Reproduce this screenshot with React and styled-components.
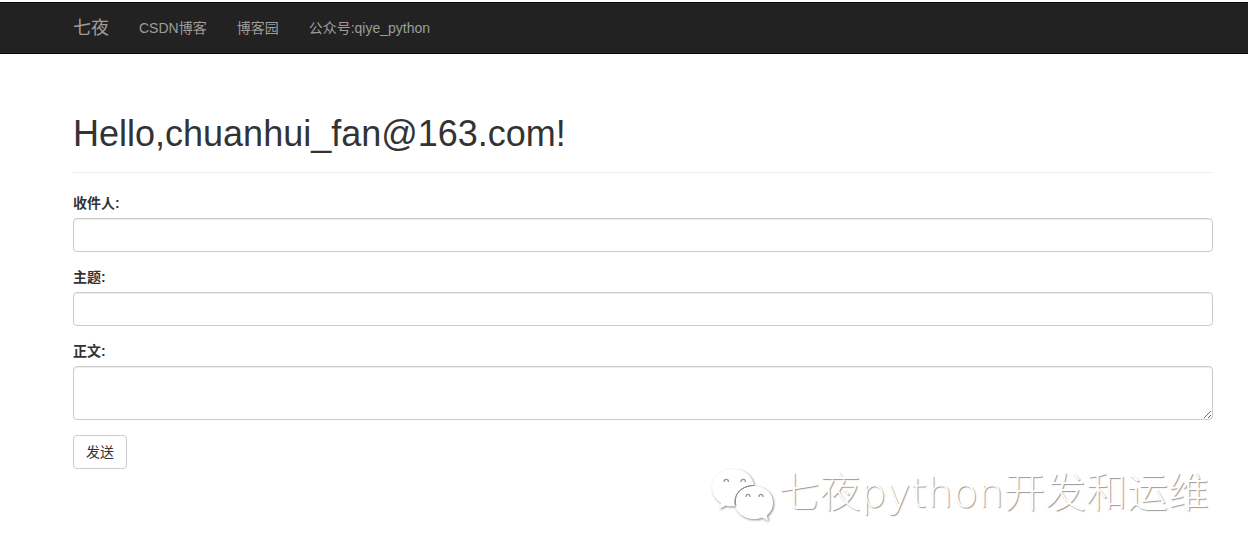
import React from "react";
import styled, { createGlobalStyle } from "styled-components";

const GlobalStyle = createGlobalStyle`
  *, *::before, *::after { box-sizing: border-box; }
  body {
    margin: 0;
    padding-top: 2px;
    background: #fff;
    color: #333;
    font-family: "Liberation Sans", Arial, "Noto Sans CJK SC", sans-serif;
    font-size: 14px;
    line-height: 20px;
  }
`;

const Navbar = styled.nav`
  display: flex;
  height: 52px;
  padding: 0 20px 0 58px;
  background: #222;
  border: solid #080808;
  border-width: 1px 0;
`;

const Brand = styled.a`
  padding: 15px;
  color: #9d9d9d;
  font-size: 18px;
  line-height: 20px;
  text-decoration: none;
`;

const NavList = styled.ul`
  display: flex;
  margin: 0;
  padding: 0;
  list-style: none;
`;

const NavLink = styled.a`
  display: block;
  padding: 15px;
  color: #9d9d9d;
  text-decoration: none;
  white-space: nowrap;
`;

const Container = styled.main`
  padding: 60px 35px 0 73px;
`;

const PageHeader = styled.header`
  padding-bottom: 18px;
  margin-bottom: 20px;
  border-bottom: 1px solid #eee;
`;

const Title = styled.h1`
  margin: 0;
  font-size: 36px;
  font-weight: 400;
  line-height: 40px;
`;

const Field = styled.div`
  margin-bottom: 15px;
`;

const Label = styled.label`
  display: block;
  margin-bottom: 5px;
  font-weight: 700;
`;

const Input = styled.input`
  display: block;
  width: 100%;
  height: ${(p) => (p.as === "textarea" ? "54px" : "34px")};
  padding: 6px 12px;
  color: #555;
  font: inherit;
  background: #fff;
  border: 1px solid #ccc;
  border-radius: 4px;
  box-shadow: inset 0 1px 1px rgba(0, 0, 0, 0.075);
  resize: vertical;
`;

const Button = styled.button`
  display: block;
  height: 34px;
  padding: 6px 12px;
  color: #333;
  font: inherit;
  background: #fff;
  border: 1px solid #ccc;
  border-radius: 4px;
`;

const Watermark = styled.footer`
  display: flex;
  justify-content: flex-end;
  align-items: flex-start;
  gap: 4px;
  padding-right: 39px;
  color: #fff;
  font-family: "DejaVu Sans Light", "DejaVu Sans", "Noto Sans CJK SC", sans-serif;
  font-size: 41px;
  font-weight: 300;
  line-height: 48px;
  text-shadow: 1px 1px 1px #999;
  white-space: nowrap;
`;

const Logo = styled.svg`
  flex: none;
  width: 64px;
  height: 54px;
  filter: drop-shadow(1px 1px 1px #888);
`;

function WeChatLogo() {
  return (
    <Logo viewBox="0 1 64 54" aria-hidden="true">
      <path
        fill="#fff"
        d="M22 1C10 1 1 9 1 19.500C1 26 4 31 10 35L8 41L15 37.500C18 38.500 21 38.500 24 38C21 27 30 17 43 17C41 7 33 1 22 1Z"
      />
      <path
        fill="#fff"
        d="M43 18C32 18 24 25 24 34.500C24 44 32 51 43 51C46 51 49 50.500 51 49.500L57 53L56 47.500C60 44 62 40 62 34.500C62 25 54 18 43 18Z"
      />
      <path
        fill="none"
        stroke="#888"
        strokeWidth="1"
        d="M25 38C22 27 30 17.500 43 17.500"
      />
      <g fill="none" stroke="#999" strokeWidth="1.300">
        <path d="M13 14C13 10.500 17.500 10.500 17.500 14M30 14C30 10.500 34.500 10.500 34.500 14" />
        <path d="M35 29C35 25.500 39 25.500 39 29M48 29C48 25.500 52 25.500 52 29" />
      </g>
    </Logo>
  );
}

const links = ["CSDN博客", "博客园", "公众号:qiye_python"];

const fields = [
  { id: "to", label: "收件人:" },
  { id: "subject", label: "主题:" },
  { id: "body", label: "正文:", as: "textarea" },
];

export default function App() {
  return (
    <>
      <GlobalStyle />
      <Navbar>
        <Brand href="#">七夜</Brand>
        <NavList>
          {links.map((text) => (
            <li key={text}>
              <NavLink href="#">{text}</NavLink>
            </li>
          ))}
        </NavList>
      </Navbar>
      <Container>
        <PageHeader>
          <Title>Hello,chuanhui_fan@163.com!</Title>
        </PageHeader>
        <form onSubmit={(e) => e.preventDefault()}>
          {fields.map(({ id, label, as }) => (
            <Field key={id}>
              <Label htmlFor={id}>{label}</Label>
              <Input id={id} name={id} as={as} />
            </Field>
          ))}
          <Button type="submit">发送</Button>
        </form>
      </Container>
      <Watermark>
        <WeChatLogo />
        <span>七夜python开发和运维</span>
      </Watermark>
    </>
  );
}
